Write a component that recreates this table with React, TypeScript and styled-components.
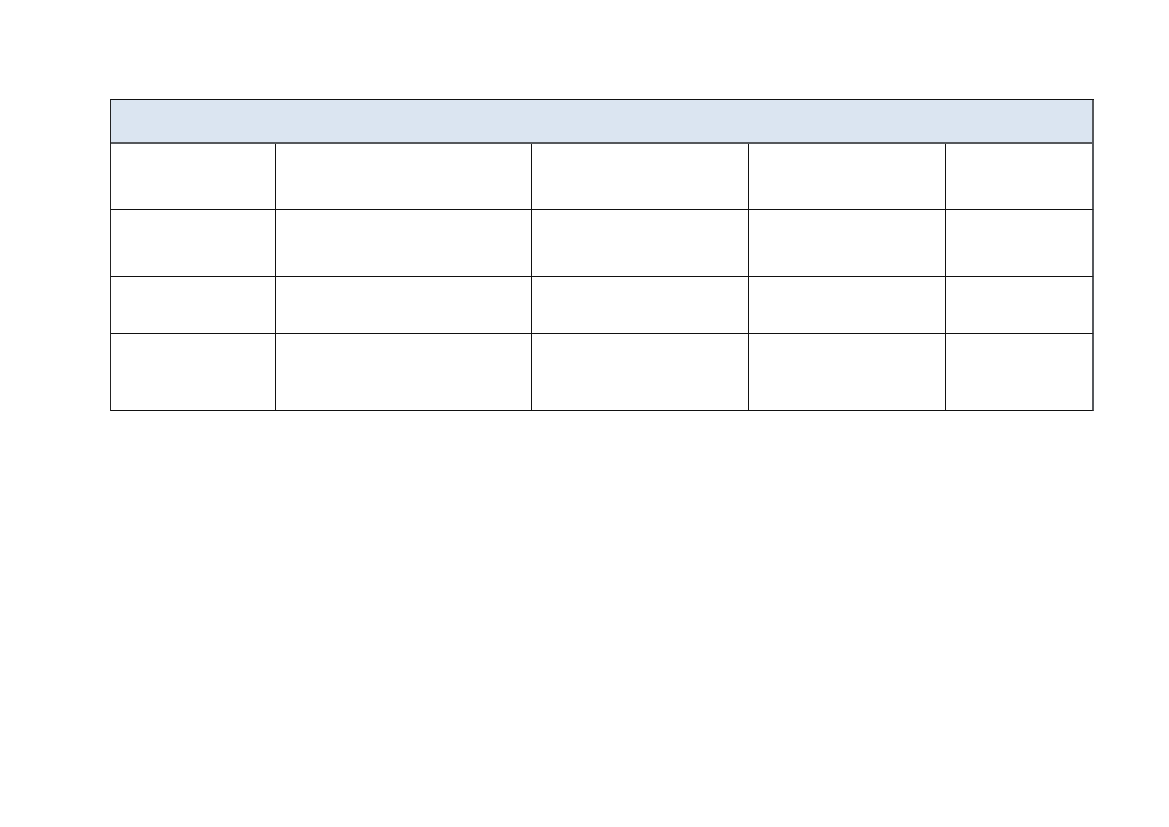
import React from "react";
import styled, { createGlobalStyle } from "styled-components";

const Global = createGlobalStyle`
  html, body { margin: 0; padding: 0; background: #ffffff; }
  body { font-family: "Liberation Sans", Arial, sans-serif; }
`;

const Page = styled.div`
  width: 1169px;
  height: 827px;
  padding: 99px 0 0 110px;
  box-sizing: border-box;
  background: #ffffff;
`;

const Table = styled.div`
  display: grid;
  grid-template-columns: 165px 256px 217px 197px 148px;
  width: 984px;
  box-sizing: border-box;
  border-top: 1px solid #111;
  border-left: 1px solid #222;
`;

const HeaderCell = styled.div`
  grid-column: 1 / -1;
  height: 44px;
  box-sizing: border-box;
  background: #dbe5f1;
  border-bottom: 2px solid #55585c;
  border-right: 2px solid #55585c;
`;

const Cell = styled.div<{ $h: number; $last: boolean }>`
  height: ${(p) => p.$h}px;
  box-sizing: border-box;
  border-bottom: 1px solid #111;
  border-right: ${(p) => (p.$last ? "2px solid #55585c" : "1px solid #111")};
  background: #ffffff;
`;

const rowHeights = [66, 67, 57, 77];
const cols = 5;

export default function App() {
  return (
    <>
      <Global />
      <Page>
        <Table>
          <HeaderCell />
          {rowHeights.map((h, r) =>
            Array.from({ length: cols }).map((_, c) => (
              <Cell key={`${r}-${c}`} $h={h} $last={c === cols - 1} />
            ))
          )}
        </Table>
      </Page>
    </>
  );
}
